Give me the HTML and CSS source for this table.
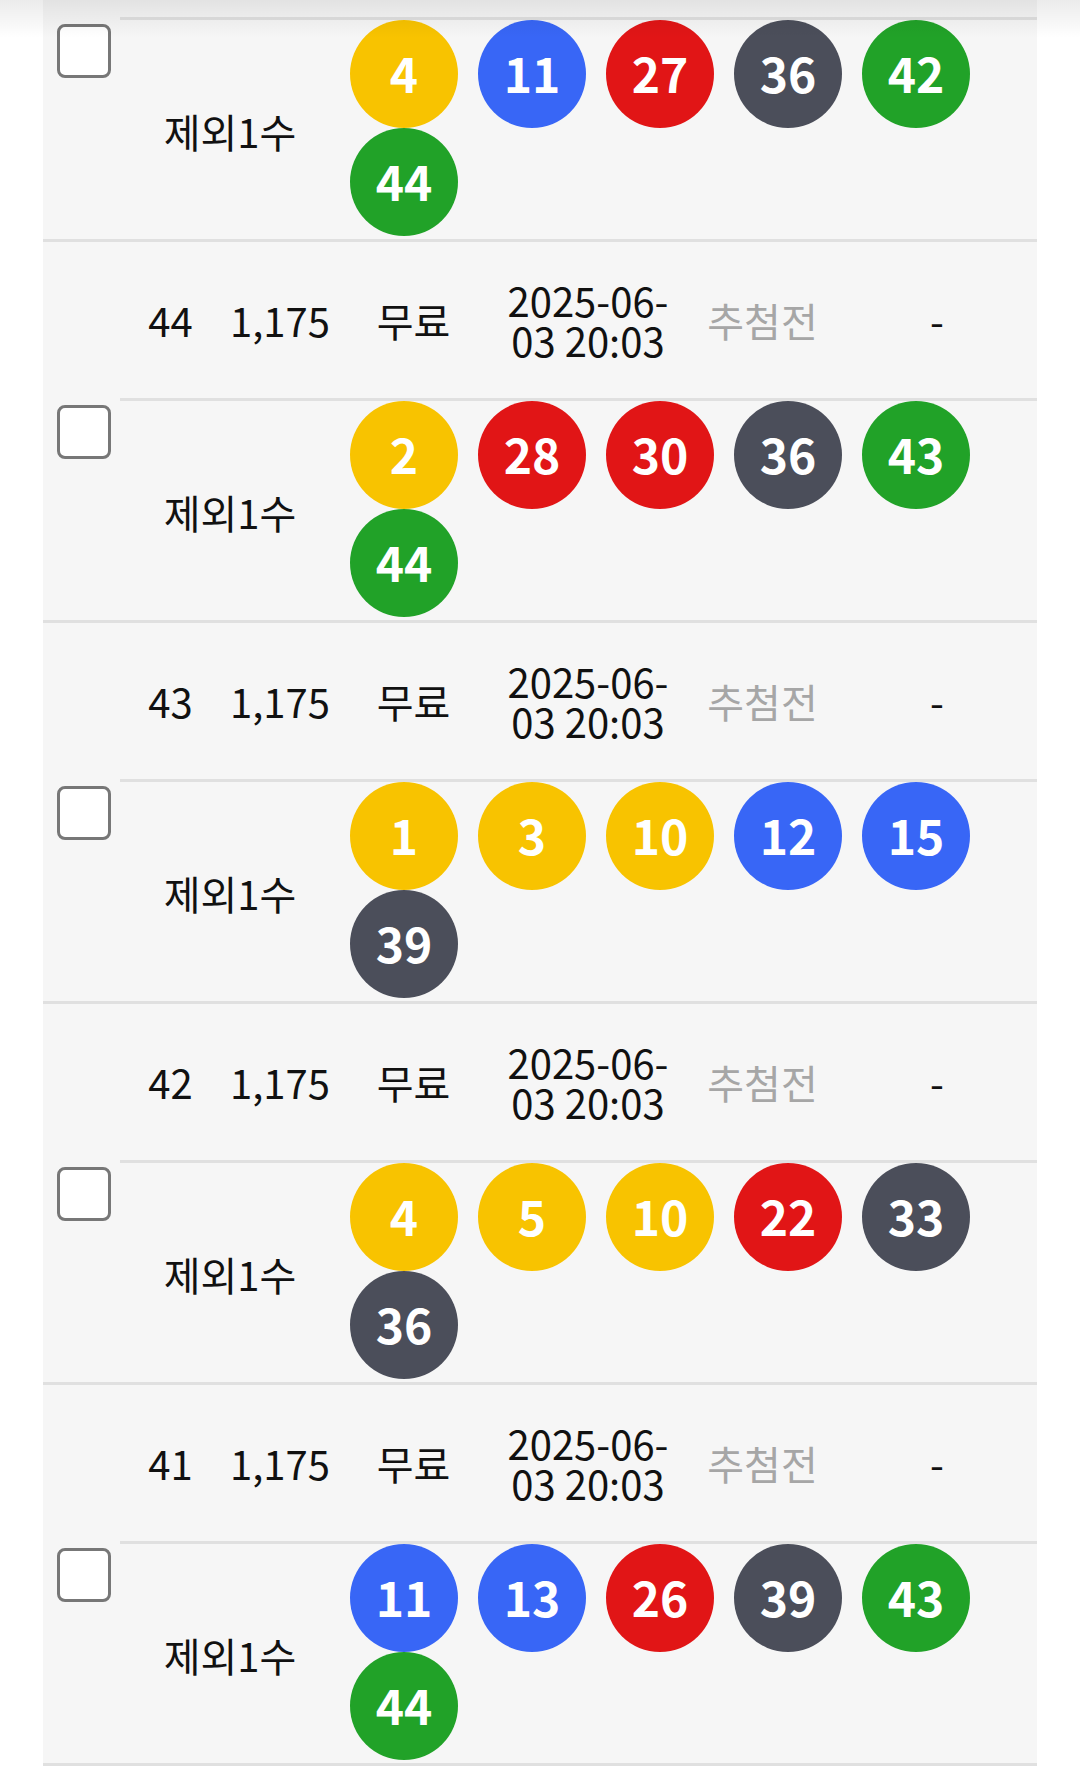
FILE: index.html
```html
<!DOCTYPE html>
<html>
<head>
    <title>구매 내역</title>
    <link rel="stylesheet" href="styles.css">
</head>
<body>
    <div class="top-shadow"></div>
    <div class="ticket-list">
        <div class="row-tail"></div>

        <div class="ball-row">
            <div class="check-cell"><input type="checkbox" class="ticket-check"></div>
            <div class="label-cell">제외1수</div>
            <div class="balls">
                <span class="ball yellow">4</span>
                <span class="ball blue">11</span>
                <span class="ball red">27</span>
                <span class="ball gray">36</span>
                <span class="ball green">42</span>
                <span class="ball green">44</span>
            </div>
        </div>

        <div class="info-row">
            <div></div>
            <div>44</div>
            <div>1,175</div>
            <div>무료</div>
            <div class="date">2025-06-<br>03 20:03</div>
            <div class="status">추첨전</div>
            <div>-</div>
        </div>
        <div class="ball-row">
            <div class="check-cell"><input type="checkbox" class="ticket-check"></div>
            <div class="label-cell">제외1수</div>
            <div class="balls">
                <span class="ball yellow">2</span>
                <span class="ball red">28</span>
                <span class="ball red">30</span>
                <span class="ball gray">36</span>
                <span class="ball green">43</span>
                <span class="ball green">44</span>
            </div>
        </div>

        <div class="info-row">
            <div></div>
            <div>43</div>
            <div>1,175</div>
            <div>무료</div>
            <div class="date">2025-06-<br>03 20:03</div>
            <div class="status">추첨전</div>
            <div>-</div>
        </div>
        <div class="ball-row">
            <div class="check-cell"><input type="checkbox" class="ticket-check"></div>
            <div class="label-cell">제외1수</div>
            <div class="balls">
                <span class="ball yellow">1</span>
                <span class="ball yellow">3</span>
                <span class="ball yellow">10</span>
                <span class="ball blue">12</span>
                <span class="ball blue">15</span>
                <span class="ball gray">39</span>
            </div>
        </div>

        <div class="info-row">
            <div></div>
            <div>42</div>
            <div>1,175</div>
            <div>무료</div>
            <div class="date">2025-06-<br>03 20:03</div>
            <div class="status">추첨전</div>
            <div>-</div>
        </div>
        <div class="ball-row">
            <div class="check-cell"><input type="checkbox" class="ticket-check"></div>
            <div class="label-cell">제외1수</div>
            <div class="balls">
                <span class="ball yellow">4</span>
                <span class="ball yellow">5</span>
                <span class="ball yellow">10</span>
                <span class="ball red">22</span>
                <span class="ball gray">33</span>
                <span class="ball gray">36</span>
            </div>
        </div>

        <div class="info-row">
            <div></div>
            <div>41</div>
            <div>1,175</div>
            <div>무료</div>
            <div class="date">2025-06-<br>03 20:03</div>
            <div class="status">추첨전</div>
            <div>-</div>
        </div>
        <div class="ball-row">
            <div class="check-cell"><input type="checkbox" class="ticket-check"></div>
            <div class="label-cell">제외1수</div>
            <div class="balls">
                <span class="ball blue">11</span>
                <span class="ball blue">13</span>
                <span class="ball red">26</span>
                <span class="ball gray">39</span>
                <span class="ball green">43</span>
                <span class="ball green">44</span>
            </div>
        </div>
    </div>
</body>
</html>
```

FILE: styles.css
```css
body {
    margin: 0;
    background-color: #ffffff;
    font-family: "Noto Sans CJK KR", "Noto Sans", sans-serif;
    color: #111111;
}

.top-shadow {
    position: absolute;
    top: 0;
    left: 0;
    right: 0;
    height: 38px;
    background: linear-gradient(rgba(0, 0, 0, 0.08), rgba(0, 0, 0, 0));
    pointer-events: none;
}

.ticket-list {
    width: 994px;
    margin-left: 43px;
    background-color: #f6f6f6;
    border-bottom: 3px solid #e0e0e0;
}

.row-tail {
    height: 17px;
}

.info-row {
    display: grid;
    grid-template-columns: 77px 101px 118px 149px 200px 149px 200px;
    align-items: center;
    height: 156px;
    border-top: 3px solid #e0e0e0;
    text-align: center;
    font-size: 40px;
}

.date {
    line-height: 40px;
}

.status {
    color: #a6a6a6;
}

.ball-row {
    display: grid;
    grid-template-columns: 77px 220px 1fr;
    padding-bottom: 3px;
}

.check-cell {
    padding: 7px 0 0 14px;
}

.ticket-check {
    appearance: none;
    -webkit-appearance: none;
    display: block;
    margin: 0;
    width: 54px;
    height: 54px;
    box-sizing: border-box;
    border: 3px solid #777777;
    border-radius: 8px;
    background-color: #ffffff;
}

.label-cell {
    display: flex;
    align-items: center;
    justify-content: center;
    border-top: 3px solid #e0e0e0;
    font-size: 40px;
    padding-top: 5px;
}

.balls {
    display: flex;
    flex-wrap: wrap;
    column-gap: 20px;
    padding-left: 10px;
    border-top: 3px solid #e0e0e0;
}

.ball {
    width: 108px;
    height: 108px;
    box-sizing: border-box;
    padding-bottom: 4px;
    border-radius: 50%;
    display: flex;
    align-items: center;
    justify-content: center;
    color: #ffffff;
    font-size: 48px;
    font-weight: bold;
}

.yellow { background-color: #f8c300; }
.blue { background-color: #3866f6; }
.red { background-color: #e11516; }
.gray { background-color: #4b4e5a; }
.green { background-color: #21a228; }
```
